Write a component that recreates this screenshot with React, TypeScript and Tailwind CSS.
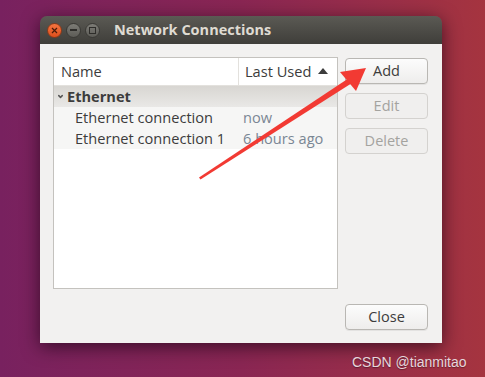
import { ChevronDown } from 'lucide-react';

function WinButton({ kind }: { kind: 'close' | 'min' | 'max' }) {
  if (kind === 'close') {
    return (
      <div className="w-[15px] h-[15px] rounded-full bg-gradient-to-b from-[#f4743f] to-[#de4f1c] border border-[#8a3a1a] flex items-center justify-center">
        <svg width="7" height="7" viewBox="0 0 7 7">
          <path d="M1 1L6 6M6 1L1 6" stroke="#4a1a08" strokeWidth="1.2" />
        </svg>
      </div>
    );
  }
  return (
    <div className="w-[15px] h-[15px] rounded-full bg-gradient-to-b from-[#7d7c76] to-[#5d5c57] border border-[#3a3935] flex items-center justify-center">
      {kind === 'min' ? (
        <div className="w-[7px] h-[1.5px] bg-[#2e2d2a]" />
      ) : (
        <div className="w-[7px] h-[7px] border border-[#2e2d2a]" />
      )}
    </div>
  );
}

function Btn({ label, disabled }: { label: string; disabled?: boolean }) {
  return (
    <button
      className={`w-[83px] h-[26px] rounded-[4px] border text-[14.5px] ${
        disabled
          ? 'border-[#d4d2cf] bg-[#f0efee] text-[#a4a39f]'
          : 'border-[#b9b7b3] bg-gradient-to-b from-[#fcfcfc] to-[#eeedec] text-[#3c3c3c] shadow-[0_1px_0_rgba(0,0,0,0.06)]'
      }`}
    >
      {label}
    </button>
  );
}

export default function App() {
  return (
    <div
      className="relative w-[485px] h-[377px] overflow-hidden bg-gradient-to-r from-[#78215f] via-[#8a2653] to-[#a5343f] pt-[16px] pl-[40px]"
      style={{ fontFamily: '"Open Sans", "DejaVu Sans", sans-serif' }}
    >
      {/* window */}
      <div className="w-[402px] h-[327px] flex flex-col rounded-t-[7px] shadow-[0_4px_18px_rgba(20,0,15,0.65)]">
        <div className="h-[28px] flex items-center gap-[4px] px-[7px] rounded-t-[7px] bg-gradient-to-b from-[#5b5a54] to-[#3f3e3a]">
          <WinButton kind="close" />
          <WinButton kind="min" />
          <WinButton kind="max" />
          <span className="ml-[10px] text-[14.5px] font-bold text-[#dfdbd2]">Network Connections</span>
        </div>

        <div className="flex-1 bg-[#f2f1f0] pt-[13px] pl-[13px] pr-[14px] pb-[13px] flex flex-col">
          <div className="flex gap-[7px]">
            {/* tree view */}
            <div className="w-[285px] h-[232px] border border-[#c4c2be] bg-white text-[14.6px] text-[#3c3c3c]">
              <div className="flex h-[28px] border-b border-[#e3e1dd]">
                <div className="w-[185px] border-r border-[#e3e1dd] flex items-center pl-[7px]">Name</div>
                <div className="flex-1 flex items-center pl-[6px] gap-[7px]">
                  Last Used
                  <svg width="10" height="6" viewBox="0 0 10 6" className="mb-[1px]">
                    <path d="M0 6L5 0L10 6Z" fill="#3c3c3c" />
                  </svg>
                </div>
              </div>
              <div className="h-[21px] flex items-center bg-gradient-to-b from-[#d8d6d2] to-[#e9e8e6] pl-[3px] font-bold">
                <ChevronDown size={7} strokeWidth={5} className="text-[#555] mr-[3px]" />
                Ethernet
              </div>
              <div className="bg-[#f6f6f5]">
                <div className="h-[21px] flex items-center">
                  <span className="w-[189px] pl-[21px]">Ethernet connection</span>
                  <span className="text-[#7a8694]">now</span>
                </div>
                <div className="h-[21px] flex items-center">
                  <span className="w-[189px] pl-[21px]">Ethernet connection 1</span>
                  <span className="text-[#7a8694]">6 hours ago</span>
                </div>
              </div>
            </div>

            {/* side buttons */}
            <div className="flex flex-col gap-[9px] pt-[1px]">
              <Btn label="Add" />
              <Btn label="Edit" disabled />
              <Btn label="Delete" disabled />
            </div>
          </div>

          <div className="mt-auto flex justify-end">
            <Btn label="Close" />
          </div>
        </div>
      </div>

      {/* annotation arrow */}
      <svg className="absolute left-0 top-0 pointer-events-none" width="485" height="377">
        <path d="M199 177.5L200.5 179.5L352 83L349 78Z" fill="#f23a33" />
        <path d="M366 68L340 72L356 91Z" fill="#f23a33" />
      </svg>

      <span
        className="absolute left-[352px] top-[352px] text-[14px] text-[#e6d6dc] [text-shadow:0_1px_1px_rgba(0,0,0,0.35)]"
        style={{ fontFamily: '"Liberation Sans", Arial, sans-serif' }}
      >
        CSDN @tianmitao
      </span>
    </div>
  );
}
